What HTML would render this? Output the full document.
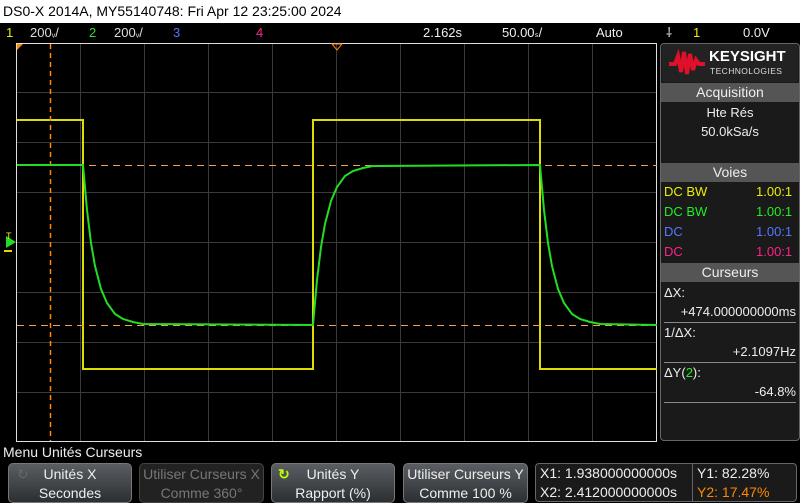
<!DOCTYPE html>
<html><head><meta charset="utf-8"><style>
*{margin:0;padding:0;box-sizing:border-box}
body{width:800px;height:503px;background:#000;font-family:"Liberation Sans",sans-serif;color:#eee;position:relative;overflow:hidden;font-size:13px}
.a{position:absolute;white-space:nowrap}
.hdr{background:#555;color:#eee;text-align:center;font-size:14px;height:19px;line-height:19px}
.btn{position:absolute;top:463px;height:40px;border-radius:5px;border:1px solid #777;background:linear-gradient(#5a5e62,#2c2f32);text-align:center;font-size:14px;line-height:19px;padding-top:1px}
</style></head><body>
<div class="a" style="left:0;top:0;width:800px;height:23px;background:#fff;color:#000;font-size:14px;line-height:23px;padding-left:3px">DS0-X 2014A, MY55140748: Fri Apr 12 23:25:00 2024</div>
<div class="a" style="top:23px;left:0;width:800px;height:19px;font-size:13px;line-height:19px">
<span class="a" style="left:6px;color:#ee0">1</span><span class="a" style="left:30px;color:#ddd">200<small>ᵥ</small>/</span>
<span class="a" style="left:89px;color:#3d3">2</span><span class="a" style="left:114px;color:#ddd">200<small>ᵥ</small>/</span>
<span class="a" style="left:173px;color:#57f">3</span><span class="a" style="left:256px;color:#f28">4</span>
<span class="a" style="left:423px">2.162s</span><span class="a" style="left:502px">50.00<small>ₛ</small>/</span>
<span class="a" style="left:596px">Auto</span><span class="a" style="left:666px">⸸</span><span class="a" style="left:693px;color:#ee0">1</span><span class="a" style="left:743px">0.0V</span></div>
<svg class="a" style="left:0;top:0" width="800" height="503">
<g stroke="#3a3a3a" stroke-width="1">
<line x1="80.5" y1="43" x2="80.5" y2="441"/><line x1="144.5" y1="43" x2="144.5" y2="441"/><line x1="208.5" y1="43" x2="208.5" y2="441"/><line x1="272.5" y1="43" x2="272.5" y2="441"/><line x1="336.5" y1="43" x2="336.5" y2="441"/><line x1="400.5" y1="43" x2="400.5" y2="441"/><line x1="464.5" y1="43" x2="464.5" y2="441"/><line x1="528.5" y1="43" x2="528.5" y2="441"/><line x1="592.5" y1="43" x2="592.5" y2="441"/>
<line x1="16" y1="92.5" x2="657" y2="92.5"/><line x1="16" y1="142.5" x2="657" y2="142.5"/><line x1="16" y1="192.5" x2="657" y2="192.5"/><line x1="16" y1="242.5" x2="657" y2="242.5"/><line x1="16" y1="292.5" x2="657" y2="292.5"/><line x1="16" y1="342.5" x2="657" y2="342.5"/><line x1="16" y1="392.5" x2="657" y2="392.5"/>
</g>
<rect x="16.5" y="43.5" width="640" height="398" fill="none" stroke="#ddd"/>
<polyline points="17,120 83,120 83,369 313,369 313,120 540,120 540,369 657,369" fill="none" stroke="#dd0" stroke-width="2"/>
<line x1="17" y1="165.5" x2="657" y2="165.5" stroke="#f0a050" stroke-dasharray="7,5"/>
<line x1="17" y1="325.5" x2="657" y2="325.5" stroke="#f0a050" stroke-dasharray="7,5"/>
<line x1="50.5" y1="44" x2="50.5" y2="441" stroke="#f80" stroke-dasharray="5,4" stroke-width="1.5"/>
<polyline points="17,165 83,165 87,210 91,243 95,266 101,289 107,303 115,314 123,319 133,322 143,324 313,325 317,280 321,247 325,224 331,201 337,187 345,176 353,171 363,168 373,166 540,165 544,210 548,243 552,266 558,289 564,303 572,314 580,319 590,322 600,324 657,325" fill="none" stroke="#2d2" stroke-width="2"/>
<path d="M17,44 L23,44 L17,50Z" fill="#f80"/>
<path d="M332,44 L342,44 L337,50Z" fill="none" stroke="#f80"/>
<path d="M6,236 L16,242 L6,248Z" fill="#2d2"/><text x="6" y="239" fill="#ee0" font-size="9">T</text>
<rect x="4" y="250" width="8" height="2" fill="#dd0"/>
</svg>
<div class="a" style="left:660px;top:43px;width:140px;height:398px;background:#1a1a1a;border:1px solid #666;border-radius:4px"></div>
<div class="a" style="left:662px;top:44px;width:136px;height:38px;background:#222;border-radius:4px"></div>
<svg class="a" style="left:667px;top:48px" width="40" height="30"><path d="M2,16 L8,16 L11,8 L14,24 L17,4 L20,26 L23,6 L26,22 L29,12 L32,16 L38,16" fill="none" stroke="#e0102a" stroke-width="4"/></svg>
<div class="a" style="left:709px;top:48px;font-size:15px;font-weight:bold;color:#fff">KEYSIGHT</div>
<div class="a" style="left:710px;top:66px;font-size:8.5px;color:#ddd;letter-spacing:.4px">TECHNOLOGIES</div>
<div class="a hdr" style="left:661px;top:83px;width:138px">Acquisition</div>
<div class="a" style="left:661px;top:105px;width:138px;text-align:center;font-size:13px">Hte Rés</div>
<div class="a" style="left:661px;top:124px;width:138px;text-align:center;font-size:13px">50.0kSa/s</div>
<div class="a hdr" style="left:661px;top:163px;width:138px">Voies</div>
<div class="a" style="left:664px;top:184px;color:#ee0">DC BW</div><div class="a" style="left:756px;top:184px;color:#ee0">1.00:1</div>
<div class="a" style="left:664px;top:204px;color:#2e2">DC BW</div><div class="a" style="left:756px;top:204px;color:#2e2">1.00:1</div>
<div class="a" style="left:664px;top:224px;color:#57f">DC</div><div class="a" style="left:756px;top:224px;color:#57f">1.00:1</div>
<div class="a" style="left:664px;top:244px;color:#f28">DC</div><div class="a" style="left:756px;top:244px;color:#f28">1.00:1</div>
<div class="a hdr" style="left:661px;top:263px;width:138px">Curseurs</div>
<div class="a" style="left:664px;top:285px">ΔX:</div>
<div class="a" style="right:4px;top:304px">+474.000000000ms</div>
<div class="a" style="left:664px;top:322px;width:132px;border-top:1px solid #888;padding-top:2px">1/ΔX:</div>
<div class="a" style="right:4px;top:344px">+2.1097Hz</div>
<div class="a" style="left:664px;top:362px;width:132px;border-top:1px solid #888;padding-top:2px">ΔY(<span style="color:#2e2">2</span>):</div>
<div class="a" style="right:4px;top:384px">-64.8%</div>
<div class="a" style="left:664px;top:402px;width:132px;border-top:1px solid #888"></div>
<div class="a" style="left:3px;top:444px;font-size:14px">Menu Unités Curseurs</div>
<div class="btn" style="left:8px;width:124px;color:#eee"><span style="position:absolute;left:8px;color:#666">↻</span>Unités X<br>Secondes</div>
<div class="btn" style="left:139px;width:125px;background:#222;color:#777;border-color:#444">Utiliser Curseurs X<br>Comme 360°</div>
<div class="btn" style="left:271px;width:124px"><span style="position:absolute;left:6px;color:#bf0;font-weight:bold">↻</span>Unités Y<br>Rapport (%)</div>
<div class="btn" style="left:403px;width:125px">Utiliser Curseurs Y<br>Comme 100 %</div>
<div class="a" style="left:535px;top:463px;width:262px;height:39px;border:1px solid #666;border-radius:4px;background:#1a1a1a;font-size:14px;line-height:19px;padding-left:4px">X1: 1.938000000000s<br>X2: 2.412000000000s
<div class="a" style="left:156px;top:0;height:37px;border-left:1px solid #666;padding-left:4px">Y1: 82.28%<br><span style="color:#f80">Y2: 17.47%</span></div></div>
</body></html>
